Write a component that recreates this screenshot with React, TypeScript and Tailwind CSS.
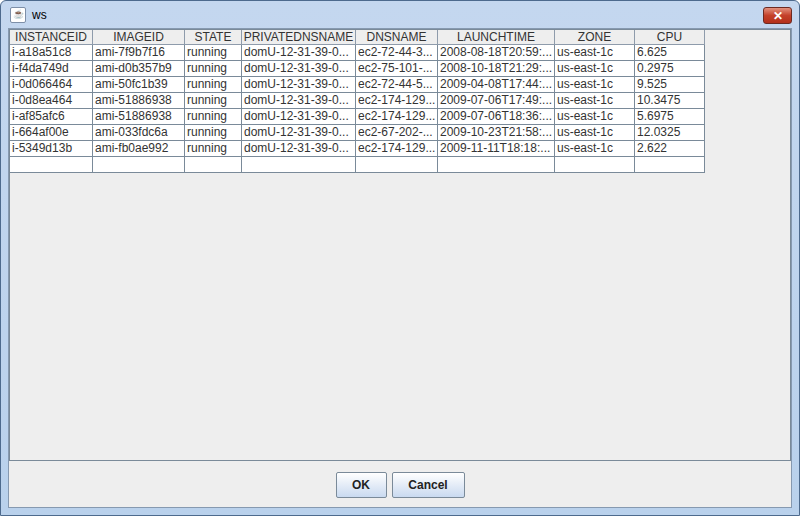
const cols = [
  ["INSTANCEID", 83],
  ["IMAGEID", 92],
  ["STATE", 57],
  ["PRIVATEDNSNAME", 114],
  ["DNSNAME", 82],
  ["LAUNCHTIME", 117],
  ["ZONE", 80],
  ["CPU", 70],
] as const;

const rows = [
  ["i-a18a51c8", "ami-7f9b7f16", "running", "domU-12-31-39-0...", "ec2-72-44-3...", "2008-08-18T20:59:...", "us-east-1c", "6.625"],
  ["i-f4da749d", "ami-d0b357b9", "running", "domU-12-31-39-0...", "ec2-75-101-...", "2008-10-18T21:29:...", "us-east-1c", "0.2975"],
  ["i-0d066464", "ami-50fc1b39", "running", "domU-12-31-39-0...", "ec2-72-44-5...", "2009-04-08T17:44:...", "us-east-1c", "9.525"],
  ["i-0d8ea464", "ami-51886938", "running", "domU-12-31-39-0...", "ec2-174-129...", "2009-07-06T17:49:...", "us-east-1c", "10.3475"],
  ["i-af85afc6", "ami-51886938", "running", "domU-12-31-39-0...", "ec2-174-129...", "2009-07-06T18:36:...", "us-east-1c", "5.6975"],
  ["i-664af00e", "ami-033fdc6a", "running", "domU-12-31-39-0...", "ec2-67-202-...", "2009-10-23T21:58:...", "us-east-1c", "12.0325"],
  ["i-5349d13b", "ami-fb0ae992", "running", "domU-12-31-39-0...", "ec2-174-129...", "2009-11-11T18:18:...", "us-east-1c", "2.622"],
  ["", "", "", "", "", "", "", ""],
];

export default function App() {
  return (
    <div
      className="w-[800px] h-[516px] bg-[linear-gradient(#c4d7ef,#b9d1ec)] border border-[#4d6a8d] rounded-t-[6px] flex flex-col overflow-hidden text-[12px] text-[#333]"
      style={{ fontFamily: '"Liberation Sans", Arial, sans-serif' }}
    >
      <div className="h-[27px] flex items-center px-[9px] gap-[6px] shrink-0 relative">
        <div className="w-[16px] h-[16px] bg-white border border-[#7d8fa8] rounded-[2px] flex items-center justify-center text-[9px] text-[#d6402c] font-bold">☕</div>
        <span className="text-[12px] text-black">ws</span>
        <div className="absolute right-[7px] top-[6px] w-[29px] h-[17px] rounded-[3px] border border-[#6d2a22] bg-[linear-gradient(#e3927f,#c4412a_50%,#b3301b)] flex items-center justify-center text-white text-[12px] font-bold leading-none">✕</div>
      </div>
      <div className="flex-1 mx-[7px] mb-[7px] bg-[#eeeeee] border border-[#8699b0] flex flex-col">
        <div className="h-[432px] border border-[#7a8a99] flex flex-col bg-[#eeeeee]">
          <div className="flex">
            {cols.map(([n, w]) => (
              <div key={n} style={{ width: w }} className="h-[15px] leading-[15px] text-center bg-[#eeeeee] border-r border-b border-[#8e9bab] shrink-0">{n}</div>
            ))}
          </div>
          {rows.map((r, i) => (
            <div key={i} className="flex">
              {r.map((c, j) => (
                <div key={j} style={{ width: cols[j][1] }} className="h-[16px] leading-[15px] pl-[2px] bg-white border-r border-b border-[#7a8a99] shrink-0 whitespace-nowrap overflow-hidden">{c}</div>
              ))}
            </div>
          ))}
        </div>
        <div className="flex-1 flex justify-center items-center gap-[5px] pt-[1px]">
          <button className="w-[51px] h-[26px] border border-[#7a8a99] rounded-[2px] bg-[linear-gradient(#ffffff,#e4ecf7_50%,#c9daf0)] font-bold text-[12px] text-[#222]">OK</button>
          <button className="w-[73px] h-[26px] border border-[#7a8a99] rounded-[2px] bg-[linear-gradient(#ffffff,#e4ecf7_50%,#c9daf0)] font-bold text-[12px] text-[#222]">Cancel</button>
        </div>
      </div>
    </div>
  );
}
